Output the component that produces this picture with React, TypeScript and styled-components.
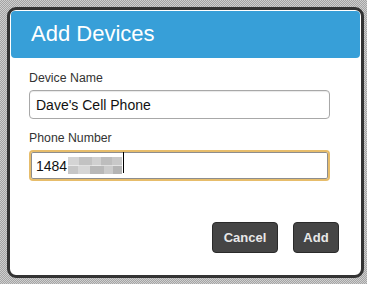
import React from 'react'
import styled, { createGlobalStyle } from 'styled-components'

const GlobalStyle = createGlobalStyle`
	html, body {
		margin: 0;
		padding: 0;
	}
	body {
		font-family: 'Liberation Sans', Arial, sans-serif;
	}
`

const Backdrop = styled.div`
	box-sizing: border-box;
	width: 367px;
	height: 284px;
	padding: 7px 3px 6px 7px;
	background: repeating-conic-gradient(#a4a4a4 0 25%, #cfcfcf 0 50%) 0 0 / 2px 2px;
`

const Dialog = styled.section`
	box-sizing: border-box;
	width: 357px;
	height: 271px;
	border: 3px solid #333;
	border-radius: 9px;
	background: #fff;
	padding: 1px;
	display: flex;
	flex-direction: column;
`

const Header = styled.header`
	height: 47px;
	background: #379fd8;
	border-radius: 4px;
	display: flex;
	align-items: center;
	padding-left: 20px;
`

const Title = styled.h1`
	margin: 0;
	color: #fff;
	font-size: 22px;
	font-weight: normal;
	padding-bottom: 1px;
`

const Body = styled.div`
	flex: 1;
	display: flex;
	flex-direction: column;
	padding: 13px 21px 0 18px;
`

const Label = styled.label`
	display: block;
	color: #333;
	font-size: 12.3px;
	line-height: 14px;
	margin-bottom: 5px;
`

const Field = styled.div<{ $focused?: boolean }>`
	box-sizing: border-box;
	width: 301px;
	height: ${({ $focused }) => ($focused ? '31px' : '29px')};
	border: ${({ $focused }) => ($focused ? '2px solid #e7bd6b' : '1px solid #a8a8a8')};
	box-shadow: ${({ $focused }) =>
		$focused ? 'inset 0 0 0 1px #8d8d8d' : 'inset 0 1px 1px #e8e8e8'};
	border-radius: 4px;
	display: flex;
	align-items: center;
	padding-left: ${({ $focused }) => ($focused ? '5px' : '6px')};
	font-size: 14px;
	color: #111;
	margin-bottom: ${({ $focused }) => ($focused ? '0' : '12px')};
`

const Redacted = styled.span`
	display: inline-block;
	width: 54px;
	height: 17px;
	margin-left: 1px;
	background:
		linear-gradient(90deg, #d4d4d4 0 20%, #c2c2c2 20% 45%, #d0d0d0 45% 62%, #bdbdbd 62% 82%, #c8c8c8 82%) top / 100% 50% no-repeat,
		linear-gradient(90deg, #c6c6c6 0 18%, #d6d6d6 18% 40%, #b8b8b8 40% 66%, #cbcbcb 66% 84%, #b4b4b4 84%) bottom / 100% 50% no-repeat;
	filter: blur(0.6px);
`

const Caret = styled.span`
	display: inline-block;
	width: 1px;
	height: 21px;
	background: #000;
	margin-left: 1px;
	align-self: flex-start;
`

const Footer = styled.div`
	display: flex;
	justify-content: flex-end;
	gap: 15px;
	margin-top: 41px;
`

const Button = styled.button<{ $width: number }>`
	width: ${({ $width }) => $width}px;
	height: 31px;
	background: #454545;
	border: 1px solid #2a2a2a;
	border-radius: 4px;
	color: #e8e8e8;
	font-family: 'Liberation Sans', Arial, sans-serif;
	font-weight: bold;
	font-size: 13px;
	padding: 0;
	cursor: pointer;
`

export default function App() {
	return (
		<>
			<GlobalStyle />
			<Backdrop>
				<Dialog>
					<Header>
						<Title>Add Devices</Title>
					</Header>
					<Body>
						<Label>Device Name</Label>
						<Field>Dave's Cell Phone</Field>
						<Label>Phone Number</Label>
						<Field $focused>
							1484
							<Redacted aria-hidden />
							<Caret />
						</Field>
						<Footer>
							<Button $width={66}>Cancel</Button>
							<Button $width={46}>Add</Button>
						</Footer>
					</Body>
				</Dialog>
			</Backdrop>
		</>
	)
}
